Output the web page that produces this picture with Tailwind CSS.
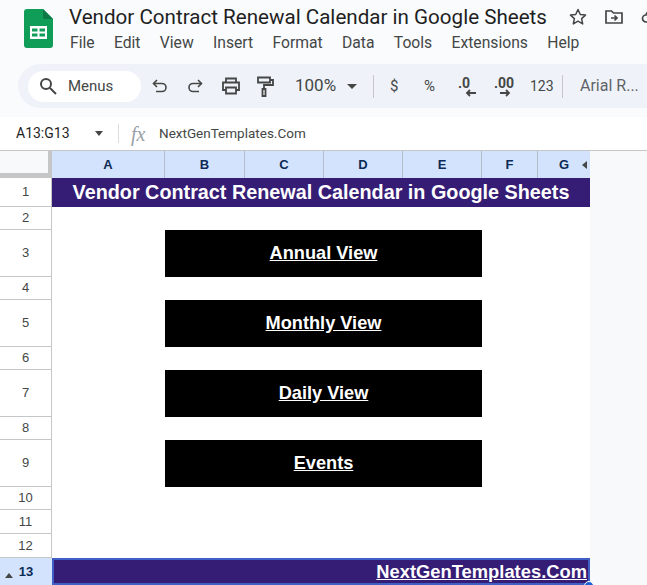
<!DOCTYPE html>
<html lang="en">
<head>
    <meta charset="UTF-8">
    <title>Vendor Contract Renewal Calendar in Google Sheets</title>
    <script src="https://cdn.jsdelivr.net/npm/@tailwindcss/browser@4"></script>
</head>
<body class="w-[647px] h-[585px] overflow-hidden bg-white font-['Roboto',sans-serif]">

    <!-- Title and menus -->
    <header class="h-[64px] bg-[#f9fbfd] flex">
        <div class="w-[69px] shrink-0 pt-[9px] pl-[24px]">
            <svg width="29" height="39" viewBox="0 0 29 39">
                <path d="M3 0H19L29 10V36a3 3 0 0 1-3 3H3a3 3 0 0 1-3-3V3a3 3 0 0 1 3-3z" fill="#0f9d58"/>
                <path d="M19 0L29 10H21a2 2 0 0 1-2-2z" fill="#0b7a44"/>
                <path d="M6 17H23V30H6z M8 19.500V22.500H13.500V19.500z M15.500 19.500V22.500H21V19.500z M8 24.500V27.500H13.500V24.500z M15.500 24.500V27.500H21V24.500z" fill="#fff" fill-rule="evenodd"/>
            </svg>
        </div>
        <div class="flex-1 min-w-0">
            <div class="flex items-center h-[34px]">
                <h1 class="text-[20.600px] leading-none text-[#1f1f1f] whitespace-nowrap w-[499px] shrink-0">Vendor Contract Renewal Calendar in Google Sheets</h1>
                <svg class="shrink-0" width="20" height="20" viewBox="0 0 20 20" fill="none" stroke="#444746" stroke-width="1.500" stroke-linejoin="round"><path d="M10 2.500l2.300 5 5.200.6-3.900 3.500 1.100 5.300-4.700-2.700-4.700 2.700 1.100-5.300-3.900-3.500 5.200-.6z"/></svg>
                <svg class="ml-[16px] shrink-0" width="20" height="18" viewBox="0 0 20 18" fill="none" stroke="#444746" stroke-width="1.700"><path d="M2 3h5.500l2 2H18v10H2z"/><path d="M7 10h6M10.500 7.500L13 10l-2.500 2.500"/></svg>
                <svg class="ml-[17px] shrink-0" width="20" height="18" viewBox="0 0 20 18" fill="none" stroke="#444746" stroke-width="1.700"><path d="M5 14a3.500 3.500 0 0 1 0-7 5 5 0 0 1 9.500-1 4 4 0 0 1 0 8z"/></svg>
            </div>
            <nav class="flex gap-[19.300px] text-[15.700px] leading-none text-[#444746] mt-[0.500px] ml-[1px] whitespace-nowrap">
                <span>File</span><span>Edit</span><span>View</span><span>Insert</span><span>Format</span><span>Data</span><span>Tools</span><span>Extensions</span><span>Help</span>
            </nav>
        </div>
    </header>

    <!-- Toolbar -->
    <div class="h-[53px] bg-[#f9fbfd] pl-[18px] pb-[9px]">
        <div class="h-[44px] bg-[#eff3f9] rounded-l-[22px] flex items-center pl-[10px] text-[#444746] whitespace-nowrap">
            <div class="w-[113px] h-[31px] shrink-0 bg-white rounded-full flex items-center pl-[11px] gap-[11px] text-[15px]">
                <svg width="18" height="18" viewBox="0 0 18 18" fill="none" stroke="#444746" stroke-width="2"><circle cx="7" cy="7" r="5"/><path d="M11 11l6 6"/></svg>
                <span>Menus</span>
            </div>
            <svg class="ml-[11px] shrink-0" width="16" height="16" viewBox="0 0 16 16" fill="none" stroke="#444746" stroke-width="1.600"><path d="M5 2L1.500 5.500 5 9"/><path d="M2 5.500h8a4 4 0 0 1 0 8H4"/></svg>
            <svg class="ml-[19px] shrink-0" width="16" height="16" viewBox="0 0 16 16" fill="none" stroke="#444746" stroke-width="1.600"><path d="M11 2l3.500 3.500L11 9"/><path d="M14 5.500H6a4 4 0 0 0 0 8h6"/></svg>
            <svg class="ml-[18px] shrink-0" width="20" height="18" viewBox="0 0 20 18" fill="none" stroke="#444746" stroke-width="1.800"><path d="M5 5V1.500h10V5"/><path d="M5 13H2V5.500h16V13h-3"/><path d="M5 10.500h10v6H5z"/></svg>
            <svg class="ml-[15px] shrink-0" width="18" height="21" viewBox="0 0 18 21" fill="none" stroke="#444746" stroke-width="1.800"><path d="M2 1.500h12v5H2z"/><path d="M14 4h3v5H8v4"/><path d="M6.500 13h3v7h-3z"/></svg>
            <span class="ml-[21px] text-[17px] w-[42px]">100%</span>
            <span class="ml-[10px] border-x-[5px] border-t-[5px] border-x-transparent border-t-[#444746]"></span>
            <span class="ml-[16px] w-px h-[23px] bg-[#c7c7c7]"></span>
            <span class="ml-[16px] text-[15px] w-[9px]">$</span>
            <span class="ml-[25px] text-[15px] w-[13px]">%</span>
            <span class="ml-[21px] relative w-[20px] h-[24px] text-[14px] font-bold leading-[18px]">.0
                <svg class="absolute left-[7px] top-[15px]" width="11" height="8" viewBox="0 0 11 8" fill="none" stroke="#444746" stroke-width="1.800"><path d="M11 4H2M5 1L2 4l3 3"/></svg>
            </span>
            <span class="ml-[16px] relative w-[22px] h-[24px] text-[14px] font-bold leading-[18px]">.00
                <svg class="absolute left-[6px] top-[15px]" width="11" height="8" viewBox="0 0 11 8" fill="none" stroke="#444746" stroke-width="1.800"><path d="M0 4h9M6 1l3 3-3 3"/></svg>
            </span>
            <span class="ml-[14px] text-[14px] w-[20px]">123</span>
            <span class="ml-[12px] w-px h-[23px] bg-[#c7c7c7]"></span>
            <span class="ml-[17px] text-[16px] text-[#5f6368]">Arial R...</span>
        </div>
    </div>

    <!-- Formula bar -->
    <div class="h-[33px] flex items-center bg-white text-[#444746]">
        <span class="ml-[16px] w-[79px] text-[14px] text-[#1f1f1f]">A13:G13</span>
        <span class="border-x-[4.500px] border-t-[5px] border-x-transparent border-t-[#444746]"></span>
        <span class="ml-[15px] w-px h-[19px] bg-[#dadce0]"></span>
        <span class="ml-[12px] w-[28px] text-[20px] italic text-[#9aa0a6] font-['Liberation_Serif',serif]">fx</span>
        <span class="text-[13.500px]">NextGenTemplates.Com</span>
    </div>

    <!-- Sheet -->
    <div class="grid grid-cols-[52px_113px_80px_79px_79px_79px_56px_52px_57px] grid-rows-[27px_29px_23px_47px_23px_47px_23px_47px_23px_47px_23px_24px_24px_27px] border-t border-[#c4c7c5] font-['Liberation_Sans',sans-serif]">
        <!-- corner and column letters -->
        <div class="bg-[#f8f9fa] border-r-[4px] border-b-[5px] border-[#c4c7c5]"></div>
        <div class="bg-[#d3e3fd] border-r border-[#b4bcc8] flex items-center justify-center text-[13px] font-bold text-[#0b2a55]">A</div>
        <div class="bg-[#d3e3fd] border-r border-[#b4bcc8] flex items-center justify-center text-[13px] font-bold text-[#0b2a55]">B</div>
        <div class="bg-[#d3e3fd] border-r border-[#b4bcc8] flex items-center justify-center text-[13px] font-bold text-[#0b2a55]">C</div>
        <div class="bg-[#d3e3fd] border-r border-[#b4bcc8] flex items-center justify-center text-[13px] font-bold text-[#0b2a55]">D</div>
        <div class="bg-[#d3e3fd] border-r border-[#b4bcc8] flex items-center justify-center text-[13px] font-bold text-[#0b2a55]">E</div>
        <div class="bg-[#d3e3fd] border-r border-[#b4bcc8] flex items-center justify-center text-[13px] font-bold text-[#0b2a55]">F</div>
        <div class="bg-[#d3e3fd] relative flex items-center justify-center text-[13px] font-bold text-[#0b2a55]">G
            <span class="absolute right-[3px] top-[10px] border-y-[4px] border-r-[5px] border-y-transparent border-r-[#444746]"></span>
        </div>
        <div class="bg-[#f8f9fa] row-span-14 col-start-9 row-start-1"></div>

        <!-- row 1 -->
        <div class="bg-white border-b border-r border-[#c4c7c5] flex items-center justify-center text-[13px] text-[#444746]">1</div>
        <div class="col-span-7 bg-[#351c75] text-white font-bold text-[19.800px] flex items-center justify-center">Vendor Contract Renewal Calendar in Google Sheets</div>

        <!-- row numbers -->
        <div class="col-start-1 row-start-3 border-b border-[#c4c7c5] border-r flex items-center justify-center text-[13px] text-[#444746]">2</div>
        <div class="col-start-1 row-start-4 border-b border-[#c4c7c5] border-r flex items-center justify-center text-[13px] text-[#444746]">3</div>
        <div class="col-start-1 row-start-5 border-b border-[#c4c7c5] border-r flex items-center justify-center text-[13px] text-[#444746]">4</div>
        <div class="col-start-1 row-start-6 border-b border-[#c4c7c5] border-r flex items-center justify-center text-[13px] text-[#444746]">5</div>
        <div class="col-start-1 row-start-7 border-b border-[#c4c7c5] border-r flex items-center justify-center text-[13px] text-[#444746]">6</div>
        <div class="col-start-1 row-start-8 border-b border-[#c4c7c5] border-r flex items-center justify-center text-[13px] text-[#444746]">7</div>
        <div class="col-start-1 row-start-9 border-b border-[#c4c7c5] border-r flex items-center justify-center text-[13px] text-[#444746]">8</div>
        <div class="col-start-1 row-start-10 border-b border-[#c4c7c5] border-r flex items-center justify-center text-[13px] text-[#444746]">9</div>
        <div class="col-start-1 row-start-11 border-b border-[#c4c7c5] border-r flex items-center justify-center text-[13px] text-[#444746]">10</div>
        <div class="col-start-1 row-start-12 border-b border-[#c4c7c5] border-r flex items-center justify-center text-[13px] text-[#444746]">11</div>
        <div class="col-start-1 row-start-13 border-b border-[#c4c7c5] border-r flex items-center justify-center text-[13px] text-[#444746]">12</div>
        <div class="col-start-1 row-start-14 bg-[#d3e3fd] relative flex items-center justify-center text-[13px] font-bold text-[#0b2a55]">13
            <span class="absolute left-[5px] top-[15px] border-x-[4px] border-b-[5px] border-x-transparent border-b-[#444746]"></span>
        </div>

        <!-- link buttons -->
        <a class="col-start-3 col-span-4 row-start-4 bg-black text-white font-bold underline text-[18.200px] flex items-center justify-center">Annual View</a>
        <a class="col-start-3 col-span-4 row-start-6 bg-black text-white font-bold underline text-[18.200px] flex items-center justify-center">Monthly View</a>
        <a class="col-start-3 col-span-4 row-start-8 bg-black text-white font-bold underline text-[18.200px] flex items-center justify-center">Daily View</a>
        <a class="col-start-3 col-span-4 row-start-10 bg-black text-white font-bold underline text-[18.200px] flex items-center justify-center">Events</a>

        <!-- selected row 13 -->
        <div class="col-start-2 col-span-7 row-start-14 relative bg-[#351c75] border-2 border-[#3f5fc4] text-white font-bold underline text-[18.350px] flex items-center justify-end pr-[1px]">NextGenTemplates.Com
            <span class="absolute right-[-6px] bottom-[-8px] w-[10px] h-[10px] rounded-full bg-[#1a62d6] border border-white"></span>
        </div>
    </div>
</body>
</html>
